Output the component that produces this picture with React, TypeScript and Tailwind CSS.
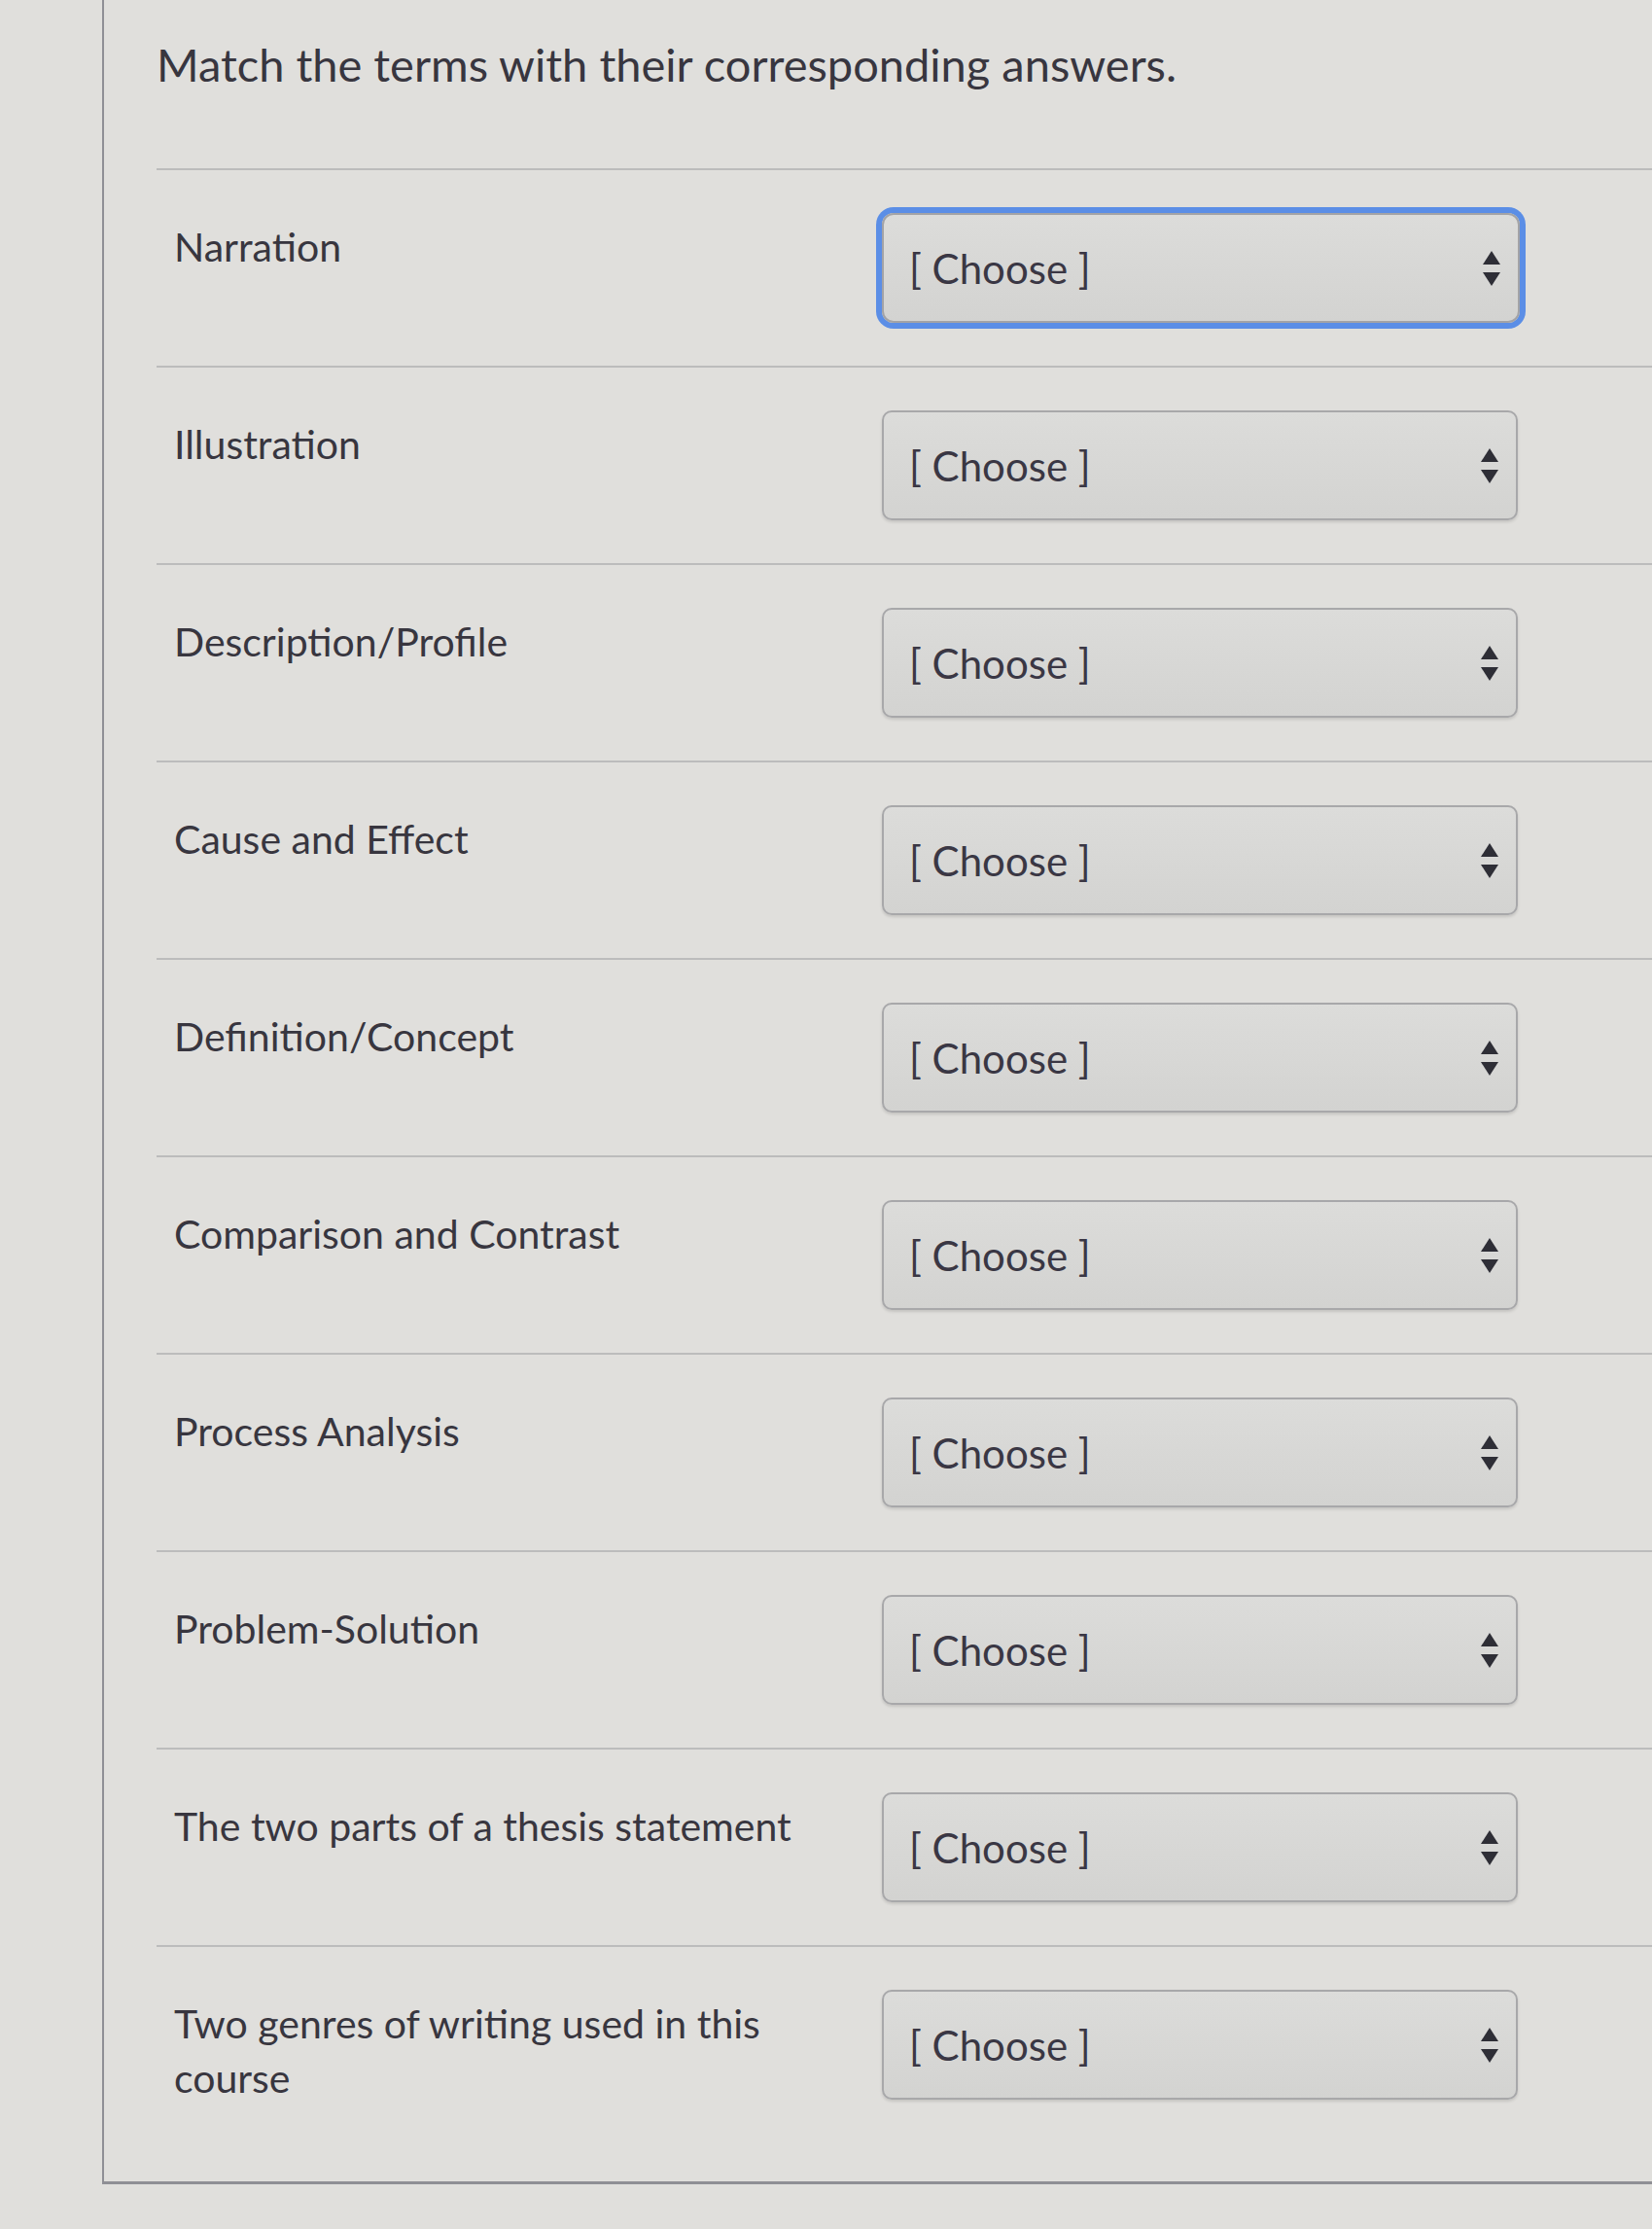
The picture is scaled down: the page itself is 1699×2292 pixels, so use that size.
import React from "react";

const items = [
  "Narration",
  "Illustration",
  "Description/Profile",
  "Cause and Effect",
  "Definition/Concept",
  "Comparison and Contrast",
  "Process Analysis",
  "Problem-Solution",
  "The two parts of a thesis statement",
  "Two genres of writing used in this course",
];

function Arrows() {
  return (
    <svg width="20" height="38" viewBox="0 0 20 38" aria-hidden="true">
      <polygon points="10,1 19,15 1,15" fill="#2e2e36" />
      <polygon points="1,23 19,23 10,37" fill="#2e2e36" />
    </svg>
  );
}

function Select({ focused }: { focused?: boolean }) {
  return (
    <div
      className={
        focused
          ? "ml-[48px] flex h-[113px] w-[656px] shrink-0 items-center justify-between rounded-[12px] border-2 border-[#a3a3a6] bg-gradient-to-b from-[#dcdcda] to-[#d3d3d1] pl-[26px] pr-[17px] ring-[6px] ring-[#5b8ee6]"
          : "ml-[48px] flex h-[113px] w-[654px] shrink-0 items-center justify-between rounded-[10px] border-2 border-[#a8a8aa] bg-gradient-to-b from-[#dcdcda] to-[#d3d3d1] pl-[26px] pr-[17px] shadow-[0_2px_3px_rgba(0,0,0,0.12)]"
      }
    >
      <span className="text-[42px] leading-none text-[#3a3744]">[ Choose ]</span>
      <Arrows />
    </div>
  );
}

export default function App() {
  return (
    <div className="min-h-[2292px] w-[1699px] overflow-hidden bg-[#e0dfdc] font-['Lato','Noto_Sans',sans-serif] text-[#38363f]">
      <div className="ml-[105px] border-b-[3px] border-l-2 border-[#8f8f95] pb-[34px] pl-[54px] pt-[32px]">
        <h1 className="text-[47px] leading-[68px]">Match the terms with their corresponding answers.</h1>
        <div className="mt-[73px]">
          {items.map((label, i) => (
            <div
              key={label}
              className="flex items-start border-t-2 border-[#bcbcbc] py-[44px] pl-[18px]"
            >
              <div className="w-[680px] shrink-0 pt-[7px] text-[41px] leading-[56px]">{label}</div>
              <Select focused={i === 0} />
            </div>
          ))}
        </div>
      </div>
    </div>
  );
}
